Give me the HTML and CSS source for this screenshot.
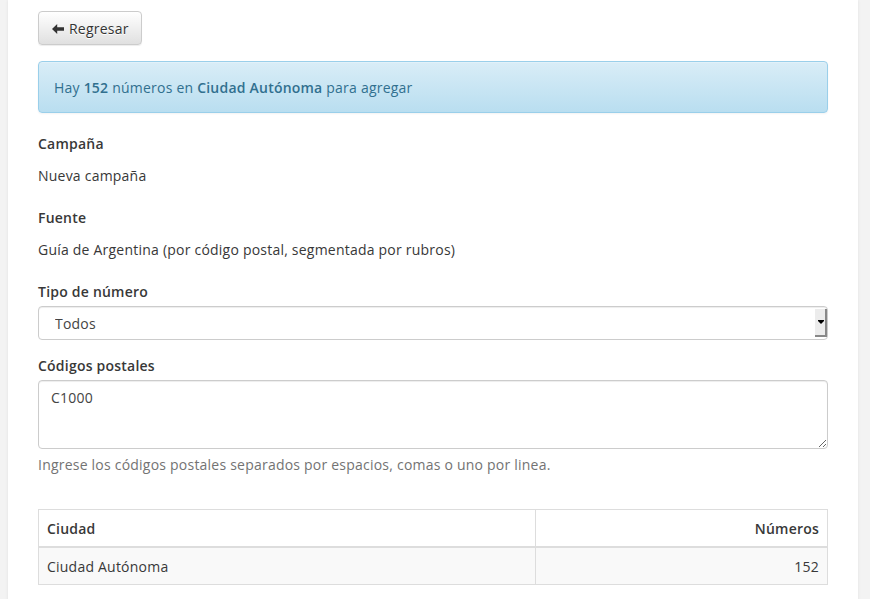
FILE: index.html
```html
<!DOCTYPE html>
<html lang="es">
<head>
<meta charset="utf-8">
<link rel="stylesheet" href="styles.css">
</head>
<body>
<div class="panel">
  <button class="btn" type="button"><svg class="ico" width="12" height="10" viewBox="0 0 12 10"><polygon points="0,5 5.2,0 5.2,3.3 12,3.3 12,6.7 5.2,6.7 5.2,10" fill="#333"/></svg>Regresar</button>
  <div class="alert">Hay <b>152</b> números en <b>Ciudad Autónoma</b> para agregar</div>

  <div class="group">
    <div class="label">Campaña</div>
    <p class="static">Nueva campaña</p>
  </div>
  <div class="group">
    <div class="label">Fuente</div>
    <p class="static">Guía de Argentina (por código postal, segmentada por rubros)</p>
  </div>
  <div class="group">
    <div class="label">Tipo de número</div>
    <div class="select-wrap">
      <select class="control select"><option>Todos</option></select>
      <span class="drop"><span class="tri"></span></span>
    </div>
  </div>
  <div class="group">
    <div class="label">Códigos postales</div>
    <textarea class="control area">C1000</textarea>
    <div class="help">Ingrese los códigos postales separados por espacios, comas o uno por linea.</div>
  </div>

  <table class="tbl">
    <thead>
      <tr><th>Ciudad</th><th class="num">Números</th></tr>
    </thead>
    <tbody>
      <tr><td>Ciudad Autónoma</td><td class="num">152</td></tr>
    </tbody>
  </table>
</div>
</body>
</html>
```
FILE: styles.css
```css
html, body {
  margin: 0;
  padding: 0;
}
body {
  background: #f3f3f3;
  font-family: "Open Sans", "Liberation Sans", sans-serif;
  font-size: 14px;
  line-height: 20px;
  letter-spacing: 0.22px;
  color: #383838;
}
.panel {
  margin-left: 8px;
  width: 790px;
  padding: 11px 30px 40px;
  background: #fff;
  box-shadow: 0 0 3px rgba(0,0,0,0.08);
  min-height: 560px;
}
.btn {
  display: inline-flex;
  align-items: center;
  gap: 5px;
  height: 34px;
  padding: 7px 12px 5px 13px;
  font-family: inherit;
  font-size: 14px;
  line-height: 20px;
  letter-spacing: 0.22px;
  color: #333;
  background: linear-gradient(to bottom, #fff 0, #e0e0e0 100%);
  border: 1px solid #ccc;
  border-radius: 4px;
  text-shadow: 0 1px 0 #fff;
  box-shadow: inset 0 1px 0 rgba(255,255,255,.15), 0 1px 1px rgba(0,0,0,.075);
}
.ico { display: block; }
.alert {
  margin-top: 16px;
  margin-bottom: 20px;
  padding: 16px 15px 14px;
  border: 1px solid #9acfea;
  border-radius: 4px;
  color: #31708f;
  background: linear-gradient(to bottom, #d9edf7 0, #b9def0 100%);
  box-shadow: inset 0 1px 0 rgba(255,255,255,.25), 0 1px 2px rgba(0,0,0,.05);
}
.alert b { font-weight: 600; }
.group { margin-bottom: 15px; }
.label {
  font-weight: 600;
  margin-bottom: 5px;
  padding-top: 1px;
  height: 19px;
}
.static {
  margin: 0;
  padding: 8px 0 6px;
  min-height: 20px;
}
.control {
  display: block;
  box-sizing: border-box;
  width: 100%;
  font-family: inherit;
  font-size: 14px;
  line-height: 20px;
  letter-spacing: 0.22px;
  color: #444;
  background: #fff;
  border: 1px solid #ccc;
  border-radius: 4px;
  box-shadow: inset 0 1px 1px rgba(0,0,0,.075);
}
.select-wrap { position: relative; }
.select {
  height: 34px;
  padding: 7px 12px 5px 16px;
  -webkit-appearance: none;
  appearance: none;
}
.drop {
  position: absolute;
  right: 1px;
  top: 3px;
  width: 12px;
  height: 28px;
  background: #ececec;
  border-right: 2px solid #888;
  border-bottom: 2px solid #888;
  box-sizing: border-box;
}
.tri {
  position: absolute;
  left: 3px;
  top: 12px;
  width: 0;
  height: 0;
  border-left: 3px solid transparent;
  border-right: 3px solid transparent;
  border-top: 3px solid #000;
}
.tri::before {
  content: "";
  position: absolute;
  left: -3px;
  top: -4px;
  width: 6px;
  height: 1px;
  background: #000;
}
.area {
  height: 69px;
  padding: 7px 12px 5px;
  resize: vertical;
}
.help {
  margin-top: 5px;
  margin-bottom: 35px;
  padding-top: 1px;
  height: 19px;
  color: #737373;
}
.tbl {
  width: 100%;
  border-collapse: collapse;
  border-spacing: 0;
  border: 1px solid #ddd;
}
.tbl th, .tbl td {
  padding: 9px 8px 7px;
  line-height: 20px;
  text-align: left;
  border: 1px solid #ddd;
}
.tbl th {
  font-weight: 600;
  border-bottom: 2px solid #ddd;
}
.tbl tbody tr { background: #f9f9f9; }
.tbl .num { text-align: right; width: 275px; }
```
